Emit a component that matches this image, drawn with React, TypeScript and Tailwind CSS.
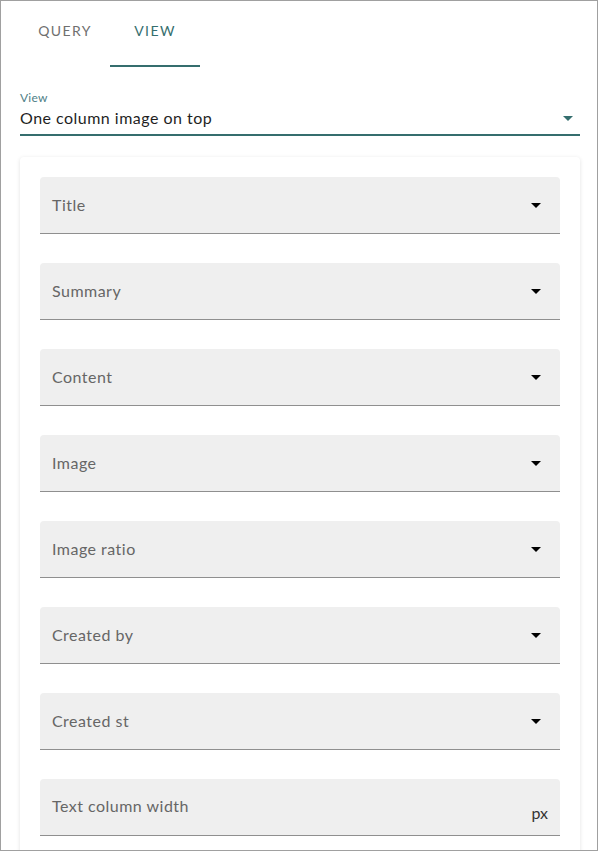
import { useState } from "react";

const fields = [
  "Title",
  "Summary",
  "Content",
  "Image",
  "Image ratio",
  "Created by",
  "Created st",
];

function Caret({ className = "" }: { className?: string }) {
  return (
    <svg width="10" height="5" viewBox="0 0 10 5" className={className}>
      <path d="M0 0h10L5 5z" fill="currentColor" />
    </svg>
  );
}

function SelectField({ label }: { label: string }) {
  return (
    <div className="flex h-[57px] items-center justify-between rounded-t-[4px] border-b border-[#8f8f8f] bg-[#efefef] pl-[12px] pr-[19px]">
      <span className="pb-[1px] text-[16px] tracking-[0.03em] text-[#666666]">
        {label}
      </span>
      <Caret className="text-black" />
    </div>
  );
}

export default function App() {
  const [tab, setTab] = useState("view");

  return (
    <div
      className="h-[851px] w-[598px] overflow-hidden border border-[#a0a0a0] bg-white"
      style={{ fontFamily: "Lato, 'Open Sans', sans-serif" }}
    >
      <div className="flex pl-[19px]">
        {[
          { id: "query", label: "QUERY" },
          { id: "view", label: "VIEW" },
        ].map((t) => (
          <button
            key={t.id}
            onClick={() => setTab(t.id)}
            className={`box-border flex h-[66px] w-[90px] justify-center border-b-2 pt-[20px] text-[14px] leading-[20px] tracking-[0.1em] ${
              tab === t.id
                ? "border-[#356e6e] text-[#356e6e]"
                : "border-transparent text-[#6f6f6f]"
            }`}
          >
            {t.label}
          </button>
        ))}
      </div>

      <div className="ml-[19px] mr-[17px] mt-[23px] border-b-2 border-[#356e6e] pb-[4px]">
        <div className="text-[12px] leading-[16px] tracking-[0.02em] text-[#4f8086]">
          View
        </div>
        <div className="flex items-center justify-between pr-[7px]">
          <span className="text-[16px] leading-[24px] tracking-[0.03em] text-[#1f1f1f]">
            One column image on top
          </span>
          <Caret className="text-[#356e6e]" />
        </div>
      </div>

      <div className="ml-[19px] mr-[17px] mt-[21px] rounded-[4px] bg-white px-[20px] pt-[20px] shadow-[0_1px_4px_rgba(0,0,0,0.12)]">
        <div className="flex flex-col gap-[29px]">
          {fields.map((f) => (
            <SelectField key={f} label={f} />
          ))}
          <div className="flex h-[57px] items-end justify-between rounded-t-[4px] border-b border-[#8f8f8f] bg-[#efefef] pb-[10px] pl-[12px] pr-[12px]">
            <span className="mb-[7px] text-[16px] tracking-[0.03em] text-[#666666]">
              Text column width
            </span>
            <span className="text-[16px] text-[#333333]">px</span>
          </div>
        </div>
        <div className="h-[40px]" />
      </div>
    </div>
  );
}
